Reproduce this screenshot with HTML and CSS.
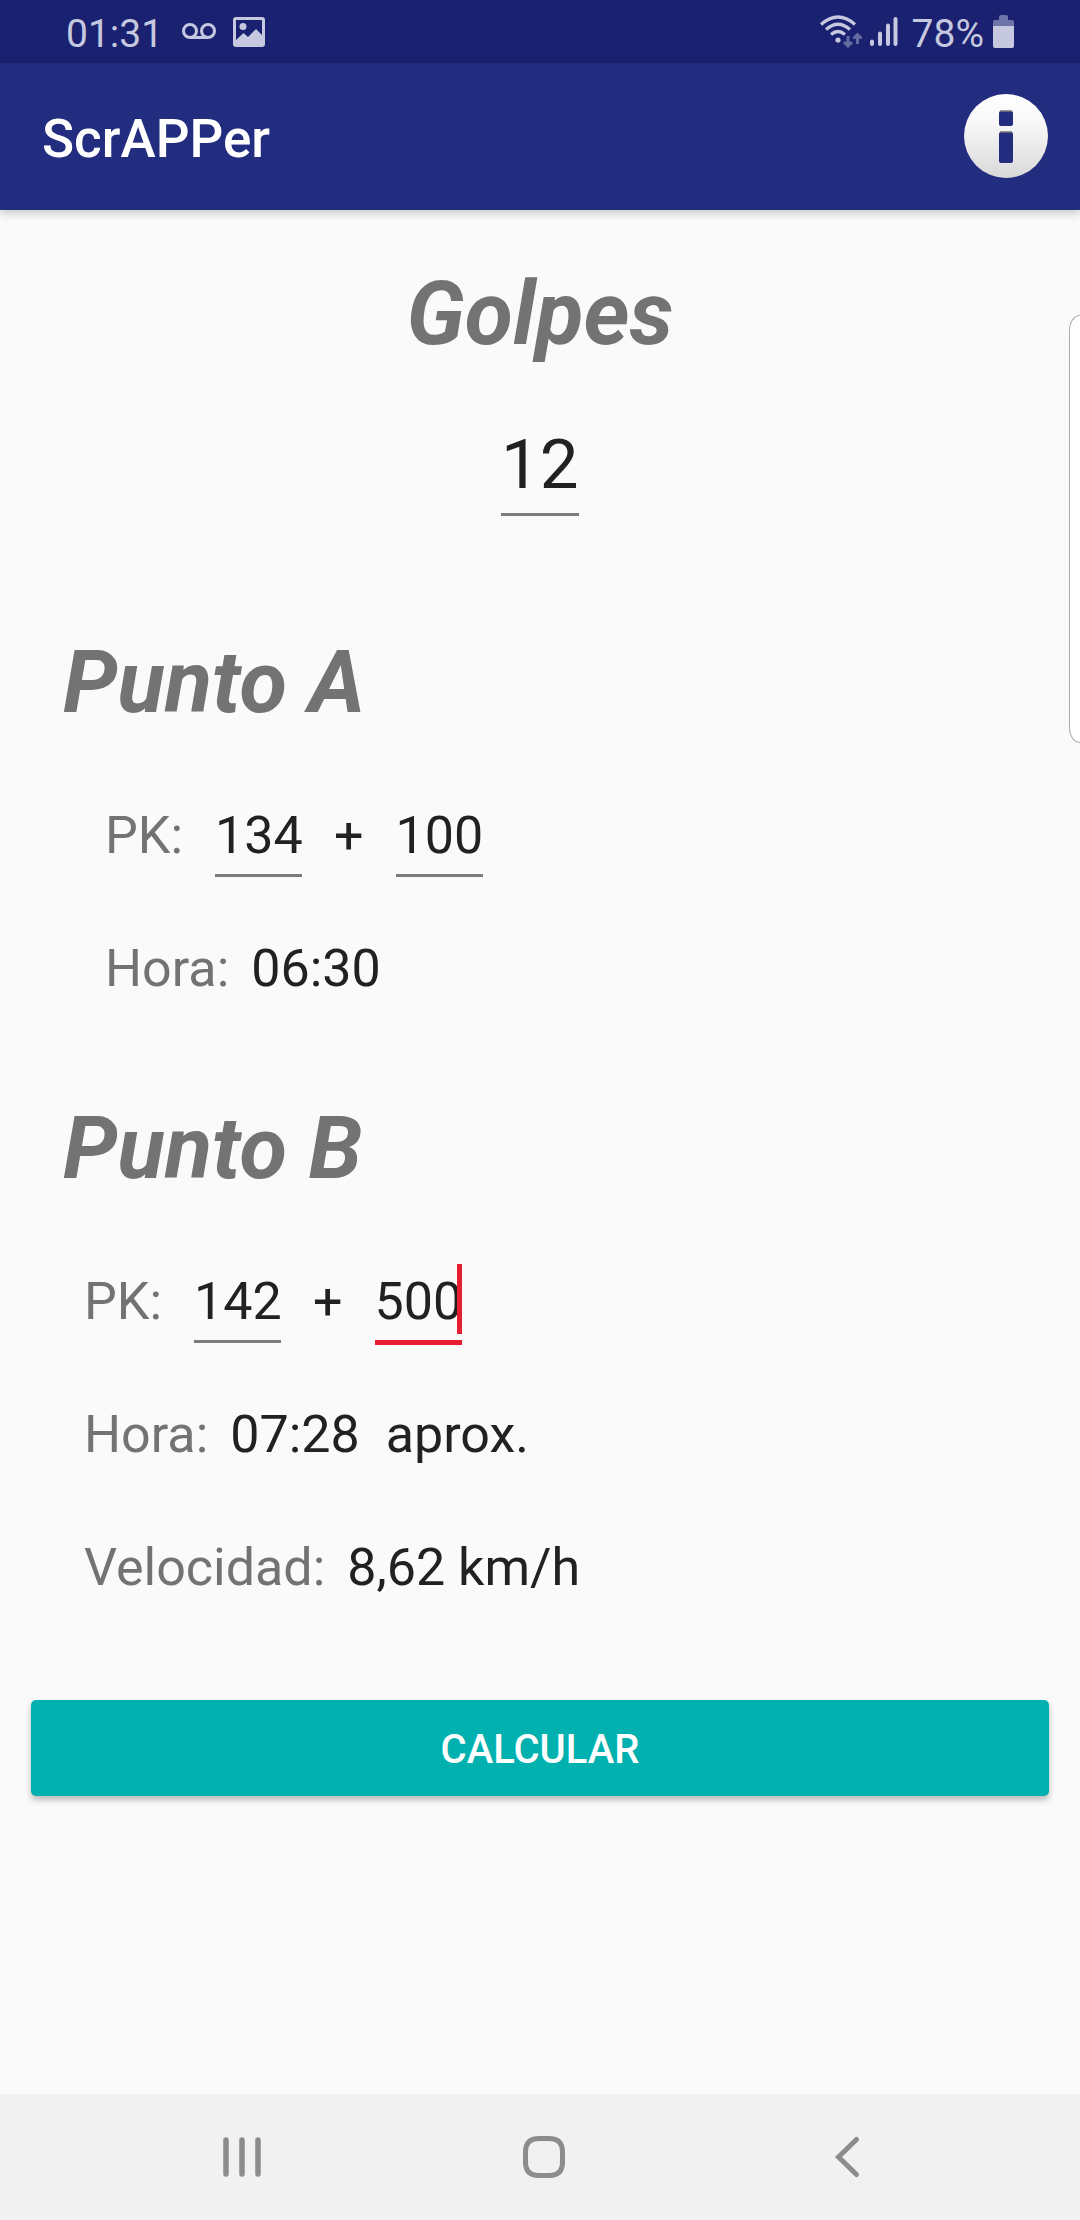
FILE: index.html
```html
<!DOCTYPE html>
<html lang="es">
<head>
<meta charset="utf-8">
<meta name="viewport" content="width=device-width, initial-scale=1">
<title>ScrAPPer</title>
<link rel="stylesheet" href="styles.css">
</head>
<body>
<div class="status">
  <div class="status-group">
    <span class="status-text">01:31</span>
    <svg class="icon-voicemail" width="34" height="17" viewBox="0 0 34 17" fill="none" stroke="currentColor" stroke-width="3"><circle cx="8" cy="8" r="6.5"/><circle cx="26" cy="8" r="6.5"/><path d="M8 14.500H26"/></svg>
    <svg class="icon-picture" width="32" height="30" viewBox="0 0 32 30"><path fill="currentColor" fill-rule="evenodd" d="M3 0H29a3 3 0 0 1 3 3V27a3 3 0 0 1-3 3H3a3 3 0 0 1-3-3V3a3 3 0 0 1 3-3ZM3 3V23L10.500 16L15 20L23 12L29 18V3Z"/><circle cx="10" cy="9.500" r="3.500" fill="currentColor"/></svg>
  </div>
  <div class="status-group status-right">
    <svg width="42" height="33" viewBox="0 0 42 33" fill="none" stroke="currentColor" stroke-width="3.200"><path d="M1 9.500Q18 -5.500 35 9.500M6 14.500Q18 4 30 14.500M11 19.500Q18 13.500 25 19.500"/><circle cx="18" cy="25" r="2.600" fill="currentColor" stroke="none"/><g opacity=".45" stroke-width="3"><path d="M28 21V31M24 27L28 31L32 27M37.500 29V19M33.500 23.500L37.500 19.500L41.500 23.500"/></g></svg>
    <svg class="icon-signal" width="28" height="31" viewBox="0 0 28 31" stroke="currentColor" stroke-width="4" stroke-linecap="round"><path d="M2 25.500V28M10 17.500V28M18 9.500V28M25.500 3V28"/></svg>
    <span class="status-text">78%</span>
    <svg class="icon-battery" width="21" height="33" viewBox="0 0 21 33" fill="currentColor"><path opacity=".5" d="M6 5V2Q6 0 8 0H13Q15 0 15 2V5H19Q21 5 21 7V11H0V7Q0 5 2 5Z"/><path d="M0 11H21V31Q21 33 19 33H2Q0 33 0 31Z"/></svg>
  </div>
</div>
<header class="appbar">
  <h1 class="appbar-title">ScrAPPer</h1>
  <button class="info" type="button" aria-label="Información">
    <svg width="84" height="84" viewBox="0 0 84 84"><defs><linearGradient id="disc" x1="0" y1="0" x2="0" y2="1"><stop offset="0" stop-color="#fff"/><stop offset=".35" stop-color="#f7f7f7"/><stop offset="1" stop-color="#d9d9d9"/></linearGradient></defs><circle cx="42" cy="42" r="42" fill="url(#disc)"/><g fill="#232d80"><rect x="35" y="17" width="14" height="15" rx="2"/><rect x="35" y="38" width="14" height="31" rx="2"/></g><path d="M36 17H48M36 38H48" stroke="#777" stroke-width="1.500"/></svg>
  </button>
</header>
<main class="content">
  <h2 class="heading heading-center"><label for="golpes">Golpes</label></h2>
  <input class="field field-large" id="golpes" type="text" inputmode="numeric" value="12">

  <section class="point point-a">
    <h2 class="heading">Punto A</h2>
    <div class="row row-pk">
      <label class="label" for="a-km">PK:</label>
      <input class="field" id="a-km" type="text" inputmode="numeric" value="134">
      <span>+</span>
      <input class="field" type="text" inputmode="numeric" value="100" aria-label="Metros del punto A">
    </div>
    <div class="row row-value"><span class="label">Hora:</span><span>06:30</span></div>
  </section>

  <section class="point point-b">
    <h2 class="heading">Punto B</h2>
    <div class="row row-pk">
      <label class="label" for="b-km">PK:</label>
      <input class="field" id="b-km" type="text" inputmode="numeric" value="142">
      <span>+</span>
      <span class="caret-box"><input class="field field-active" type="text" inputmode="numeric" value="500" aria-label="Metros del punto B"></span>
    </div>
    <div class="row row-value"><span class="label">Hora:</span><span>07:28</span><span class="approx">aprox.</span></div>
    <div class="row row-value row-speed"><span class="label">Velocidad:</span><span>8,62 km/h</span></div>
  </section>

  <button class="calculate" type="button">CALCULAR</button>
</main>
<nav class="navbar" aria-label="Sistema">
  <button class="nav-button" type="button" aria-label="Recientes"><svg width="44" height="44" viewBox="0 0 44 44" stroke="currentColor" stroke-width="5.500" stroke-linecap="round"><path d="M6 5V39M22 5V39M38 5V39"/></svg></button>
  <button class="nav-button" type="button" aria-label="Inicio"><svg width="44" height="44" viewBox="0 0 44 44" fill="none" stroke="currentColor" stroke-width="5"><path d="M22 3.500H27Q40.500 3.500 40.500 17V27Q40.500 40.500 27 40.500H17Q3.500 40.500 3.500 27V17Q3.500 3.500 17 3.500Z"/></svg></button>
  <button class="nav-button" type="button" aria-label="Atrás"><svg width="44" height="44" viewBox="0 0 44 44" fill="none" stroke="currentColor" stroke-width="5" stroke-linecap="round"><path d="M31.500 4.500L13.500 22L31.500 39.500"/></svg></button>
</nav>
<div class="edge-handle"></div>
</body>
</html>
```
FILE: styles.css
```css
* {
  box-sizing: border-box;
}

body {
  margin: 0;
  min-height: 100vh;
  display: flex;
  flex-direction: column;
  background: #fafafa;
  color: #212121;
  font-family: Roboto, sans-serif;
  font-size: 52px;
  line-height: 62px;
}

button,
input {
  margin: 0;
  padding: 0;
  border: 0;
  background: none;
  color: inherit;
  font: inherit;
}

svg {
  display: block;
}

.status {
  display: flex;
  justify-content: space-between;
  align-items: center;
  height: 63px;
  padding: 0 66px;
  background: #192170;
  color: #c5c8df;
  font-size: 39px;
  line-height: 60px;
}

.status-group {
  display: flex;
  align-items: center;
}

.status-text {
  padding-top: 4px;
}

.icon-voicemail {
  margin-left: 19px;
}

.icon-picture {
  margin-left: 17px;
}

.icon-signal {
  margin: 0 14px 0 8px;
}

.icon-battery {
  margin-left: 9px;
}

.appbar {
  display: flex;
  justify-content: space-between;
  align-items: center;
  height: 147px;
  padding: 0 32px 0 42px;
  background: #232d80;
  color: #fff;
  box-shadow: 0 2px 10px rgba(0, 0, 0, 0.25);
}

.appbar-title {
  margin: 0;
  padding-top: 4px;
  font-size: 53px;
  font-weight: 500;
}

.info {
  padding-bottom: 2px;
}

.content {
  flex: 1;
  display: flex;
  flex-direction: column;
  padding: 52px 31px;
}

.heading {
  margin: 0;
  color: #737373;
  font-size: 87px;
  font-style: italic;
  font-weight: 700;
  line-height: 104px;
}

.heading-center {
  font-size: 88px;
  text-align: center;
}

.field {
  width: 87px;
  height: 73px;
  padding-bottom: 8px;
  border-bottom: 3px solid #7c7c7c;
  outline: 0;
}

.field-large {
  align-self: center;
  width: 78px;
  height: 92px;
  margin-top: 58px;
  padding-bottom: 9px;
  font-size: 69px;
  line-height: 80px;
}

.field-active {
  border-color: #e61e32;
  box-shadow: 0 2px #e61e32;
}

.caret-box {
  position: relative;
}

.caret-box::after {
  content: "";
  position: absolute;
  right: 0;
  top: -6px;
  width: 5px;
  height: 70px;
  background: #e61e32;
}

.point {
  padding-left: 32px;
}

.point-a {
  margin-top: 114px;
}

.point-b {
  margin-top: 96px;
}

.row {
  display: flex;
  align-items: baseline;
  padding-left: 21px;
}

.point-a .row {
  padding-left: 42px;
}

.label {
  color: #737373;
}

.row-pk {
  gap: 32px;
  margin-top: 70px;
}

.row-value {
  gap: 22px;
  margin-top: 61px;
}

.row-speed {
  margin-top: 71px;
}

.approx {
  padding-left: 4px;
}

.calculate {
  height: 96px;
  margin-top: 101px;
  padding-top: 4px;
  border-radius: 5px;
  background: #00b1b0;
  box-shadow: 0 4px 6px rgba(0, 0, 0, 0.25);
  color: #fff;
  font-size: 40px;
  font-weight: 500;
}

.navbar {
  display: flex;
  height: 126px;
  padding: 0 82px 0 91px;
  background: #f1f1f1;
  color: #8c8c8c;
}

.nav-button {
  flex: 1;
  display: flex;
  justify-content: center;
  align-items: center;
}

.edge-handle {
  position: absolute;
  top: 315px;
  right: 0;
  width: 11px;
  height: 428px;
  border: 1px solid #ababab;
  border-right: 0;
  border-radius: 12px 0 0 12px / 17px 0 0 17px;
  background: #fff;
}
```
